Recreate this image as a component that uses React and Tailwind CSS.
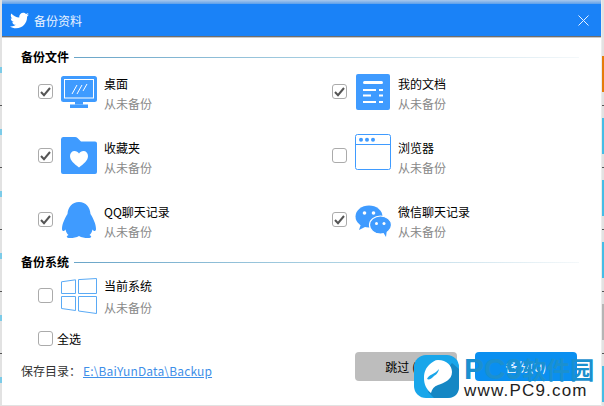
import React from 'react';
import { FaTwitter } from 'react-icons/fa';

const BLUE = '#3f9bff';

// ── Icons ──────────────────────────────────────────────────────────
function DesktopIcon() {
  return (
    <svg width="36" height="36" viewBox="0 0 36 36" className="overflow-visible">
      <rect x="0" y="2" width="36" height="26" rx="2.5" fill={BLUE} />
      <rect x="3.5" y="5.5" width="29" height="18.5" fill="none" stroke="#fff" strokeWidth="1" />
      <path d="M11 20L16 11M16 20L21 11M22 17L26 10" stroke="#fff" strokeWidth="1" fill="none" />
      <rect x="14" y="28" width="8" height="2.5" fill={BLUE} />
      <rect x="9" y="30.5" width="18" height="3.5" fill={BLUE} />
    </svg>
  );
}

function DocIcon() {
  return (
    <svg width="36" height="36" viewBox="0 0 36 36">
      <rect x="1" y="0" width="34" height="36" rx="2" fill={BLUE} />
      <rect x="8" y="7" width="20" height="3" rx="1.5" fill="#fff" />
      <path d="M8 16H21M24 16H28M8 21.5H16M24 21.5H28M8 28H21M24 28H28" stroke="#fff" strokeWidth="1.8" fill="none" />
    </svg>
  );
}

function FolderIcon() {
  return (
    <svg width="36" height="36" viewBox="0 0 36 36" className="overflow-visible">
      <path d="M0 1.5Q0 -1 2 -1H14Q15.5 -1 16.5 0L20 3.5H34Q36 3.5 36 5.5V34Q36 36 34 36H2Q0 36 0 34Z" fill={BLUE} />
      <path d="M18 29.5C13 25.5 9 22.5 9 18C9 15 11 13 13.5 13C15.5 13 17 14 18 15.5C19 14 20.5 13 22.5 13C25 13 27 15 27 18C27 22.5 23 25.5 18 29.5Z" fill="#fff" />
    </svg>
  );
}

function BrowserIcon() {
  return (
    <svg width="36" height="36" viewBox="0 0 36 36" className="overflow-visible">
      <g transform="translate(0,-4)">
        <rect x="0.5" y="0.5" width="35" height="35" rx="2" fill="none" stroke={BLUE} strokeWidth="1" />
        <path d="M0.5 10.5H35.5" stroke={BLUE} strokeWidth="1" />
        <circle cx="6" cy="5.7" r="2" fill={BLUE} />
        <circle cx="12" cy="5.7" r="2" fill={BLUE} />
        <circle cx="18" cy="5.7" r="2" fill={BLUE} />
      </g>
    </svg>
  );
}

function QQIcon() {
  return (
    <svg width="36" height="36" viewBox="0 0 36 36">
      <path
        d="M18 0C25 0 29 5 29.5 12C32 16 35 22 35 27C35 29 33.5 30 31.5 27.5C31 30 30 32 28.5 33C31 34 31 36 27 36C23.5 36 20.5 35.5 18 34C15.5 35.5 12.5 36 9 36C5 36 5 34 7.5 33C6 32 5 30 4.5 27.5C2.5 30 1 29 1 27C1 22 4 16 6.5 12C7 5 11 0 18 0Z"
        fill={BLUE}
      />
    </svg>
  );
}

function WechatIcon() {
  return (
    <svg width="36" height="36" viewBox="0 0 36 36" className="overflow-visible">
      <g transform="translate(0,4)">
        <ellipse cx="14" cy="10.5" rx="13.5" ry="11" fill={BLUE} />
        <path d="M6 18L4 24L12 20Z" fill={BLUE} />
        <circle cx="9.5" cy="7" r="1.8" fill="#fff" />
        <circle cx="18.5" cy="7" r="1.8" fill="#fff" />
        <ellipse cx="25.5" cy="19" rx="11" ry="9" fill={BLUE} stroke="#fff" strokeWidth="1.2" />
        <path d="M28 26L31 31L32 23Z" fill={BLUE} />
        <circle cx="21.5" cy="17.5" r="1.5" fill="#fff" />
        <circle cx="29" cy="17.5" r="1.5" fill="#fff" />
      </g>
    </svg>
  );
}

function WindowsIcon() {
  return (
    <svg width="36" height="36" viewBox="0 0 36 36" fill="none" stroke="#5aaaf5" strokeWidth="1">
      <path d="M0.5 3.8L14.5 1.8V15.5H0.5Z" />
      <path d="M17.5 1.6L35.5 0.5V15.5H17.5Z" />
      <path d="M0.5 18.5H14.5V32.5L0.5 30.5Z" />
      <path d="M17.5 18.5H35.5V35.5L17.5 33Z" />
    </svg>
  );
}

function Checkbox({ checked, className = '' }) {
  return (
    <div className={`w-[15px] h-[15px] shrink-0 rounded-[3px] border border-[#ababab] bg-white flex items-center justify-center ${className}`}>
      {checked && (
        <svg width="11" height="10" viewBox="0 0 11 10">
          <path d="M1 5L4 8.2L10 1" fill="none" stroke="#555" strokeWidth="2" />
        </svg>
      )}
    </div>
  );
}

// ── Backup item ────────────────────────────────────────────────────
function Item({ icon, name, compact, checked }) {
  return (
    <div className="flex items-start h-9">
      <Checkbox checked={checked} className="mt-[10px]" />
      <div className="w-9 h-9 ml-2 shrink-0 flex items-center justify-center">{icon}</div>
      <div className={`ml-[7px] flex flex-col ${compact ? 'gap-[6px]' : 'pt-[2px] gap-1'}`}>
        <span className="text-xs leading-4 text-black whitespace-nowrap">{name}</span>
        <span className="text-xs leading-4 text-[#888] whitespace-nowrap">从未备份</span>
      </div>
    </div>
  );
}

function SectionTitle({ title, className = '' }) {
  return (
    <div className={`flex items-center h-[14px] pr-[22px] ${className}`}>
      <span className="text-xs leading-[14px] font-bold text-black whitespace-nowrap">{title}</span>
      <div className="flex-1 h-px ml-[5px] bg-gradient-to-r from-[#6aa5c8] via-[#a9d0e2] to-[#f4f8fa]" />
    </div>
  );
}

// ── Background that shows beside the window ────────────────────────
const SEGMENTS = ['bg-[#e57c0c]', 'bg-[#45bde6]', 'bg-[#45bde6]', 'bg-[#45bde6]', 'bg-[#b5b5b5]', 'bg-[#45bde6]'];

function RightEdge() {
  return (
    <div className="w-[2px] shrink-0 flex flex-col pt-[56px]">
      {SEGMENTS.map((color, i) => (
        <div key={i} className="shrink-0">
          <div className={`h-9 ${color}`} />
          <div className="h-[13px]" />
          <div className="h-px bg-[#555]" />
          <div className="h-3" />
        </div>
      ))}
    </div>
  );
}

function LeftEdge() {
  return (
    <div className="w-[2px] shrink-0 flex flex-col pt-[67px]">
      {SEGMENTS.map((_, i) => (
        <div key={i} className="shrink-0">
          <div className="h-[6px] bg-[#7ccbe8]" />
          <div className="h-[32px]" />
          <div className="h-px bg-[#555]" />
          <div className="h-[23px]" />
        </div>
      ))}
    </div>
  );
}

// ── Site watermark over the corner ─────────────────────────────────
function Watermark() {
  return (
    <div className="absolute left-[414px] top-[355px] flex items-start gap-[5px]">
      <svg width="45" height="43" viewBox="0 0 45 43" className="shrink-0">
        <rect x="0" y="0" width="45" height="43" rx="12" fill="#19a6ea" />
        <path d="M14 37L38 8L45 14V31Q45 43 33 43H20Z" fill="#1587c4" />
        <path d="M24 5C33 5 38 11 38 17C38 25 30 28 24 30C20 31.5 18 34 17 38C12 34 10 29 10 23C10 17 12 13 15 10C18 7 21 5 24 5Z" fill="#fff" />
        <path d="M13 24C15 19 20 20 25 14C24 19 21 20 19 22C17 24 15 25 13 24Z" fill="#19a6ea" />
      </svg>
      <div className="flex flex-col" style={{ fontFamily: '"Liberation Sans", sans-serif' }}>
        <div className="flex items-center h-[27px] text-[#1b90cf] whitespace-nowrap">
          <span className="text-[30px] leading-[27px] font-bold">PC9</span>
          <span className="text-2xl leading-[27px] font-bold" style={{ fontFamily: '"Noto Sans CJK SC", sans-serif' }}>软件园</span>
        </div>
        <div className="text-[17px] leading-[14px] mt-[2px] tracking-[1.2px] text-[#222] whitespace-nowrap">www.PC9.com</div>
      </div>
    </div>
  );
}

export default function App() {
  return (
    <div
      className="relative w-[604px] h-[406px] overflow-hidden bg-[#e2e2e2] flex"
      style={{ fontFamily: '"Noto Sans CJK SC", "Liberation Sans", sans-serif' }}
    >
      <LeftEdge />

      <div className="w-[599px] h-[405px] shrink-0 flex flex-col">
        <div className="h-1 shrink-0 bg-gradient-to-b from-[#a9c8ec] to-[#5d9fe8]" />
        <div className="h-8 shrink-0 bg-[#1a82f7] flex items-center pl-2 pr-[12px]">
          <FaTwitter size={19} className="text-white" />
          <span className="ml-[5px] mt-px text-xs text-[#eaf3ff]">备份资料</span>
          <svg width="11" height="11" viewBox="0 0 11 11" className="ml-auto">
            <path d="M0.5 0.5L10.5 10.5M10.5 0.5L0.5 10.5" stroke="#e8f2ff" strokeWidth="1" />
          </svg>
        </div>
        <div className="h-px shrink-0 bg-[#6e6e6e]" />
        <div className="h-px shrink-0 bg-[#c8c8c8]" />

        <div className="flex-1 bg-white pt-3 pl-[19px] flex flex-col">
          <SectionTitle title="备份文件" />

          <div className="mt-[10px] pl-[17px] grid grid-cols-[294px_1fr] gap-y-7">
            <Item icon={<DesktopIcon />} name="桌面" checked />
            <Item icon={<DocIcon />} name="我的文档" checked />
            <Item icon={<FolderIcon />} name="收藏夹" checked />
            <Item icon={<BrowserIcon />} name="浏览器" />
            <Item icon={<QQIcon />} name="QQ聊天记录" checked />
            <Item icon={<WechatIcon />} name="微信聊天记录" checked />
          </div>

          <SectionTitle title="备份系统" className="mt-[17px]" />

          <div className="mt-[9px] pl-[17px]">
            <Item icon={<WindowsIcon />} name="当前系统" compact />
          </div>

          <div className="mt-[17px] pl-[17px] flex items-center gap-1 h-[15px]">
            <Checkbox />
            <span className="text-xs leading-4 text-black">全选</span>
          </div>

          <div className="mt-[6px] h-[29px] pr-[24px] flex items-end justify-between">
            <div className="text-xs leading-4 text-[#333] whitespace-nowrap pb-[2px]">
              保存目录：
              <a className="ml-[2px] text-[#3f8fe8] underline tracking-[0.15px]">E:\BaiYunData\Backup</a>
            </div>
            <div className="flex gap-[18px]">
              <button className="w-[102px] h-[29px] rounded-[4px] bg-[#bdbdbd] text-xs text-black">跳过 (0)</button>
              <button className="w-[102px] h-[29px] rounded-[4px] bg-[#0a8ff0] text-xs text-white">备份(U)</button>
            </div>
          </div>
        </div>
      </div>

      <div className="w-px shrink-0 bg-[#ececec]" />
      <RightEdge />

      <Watermark />
    </div>
  );
}
